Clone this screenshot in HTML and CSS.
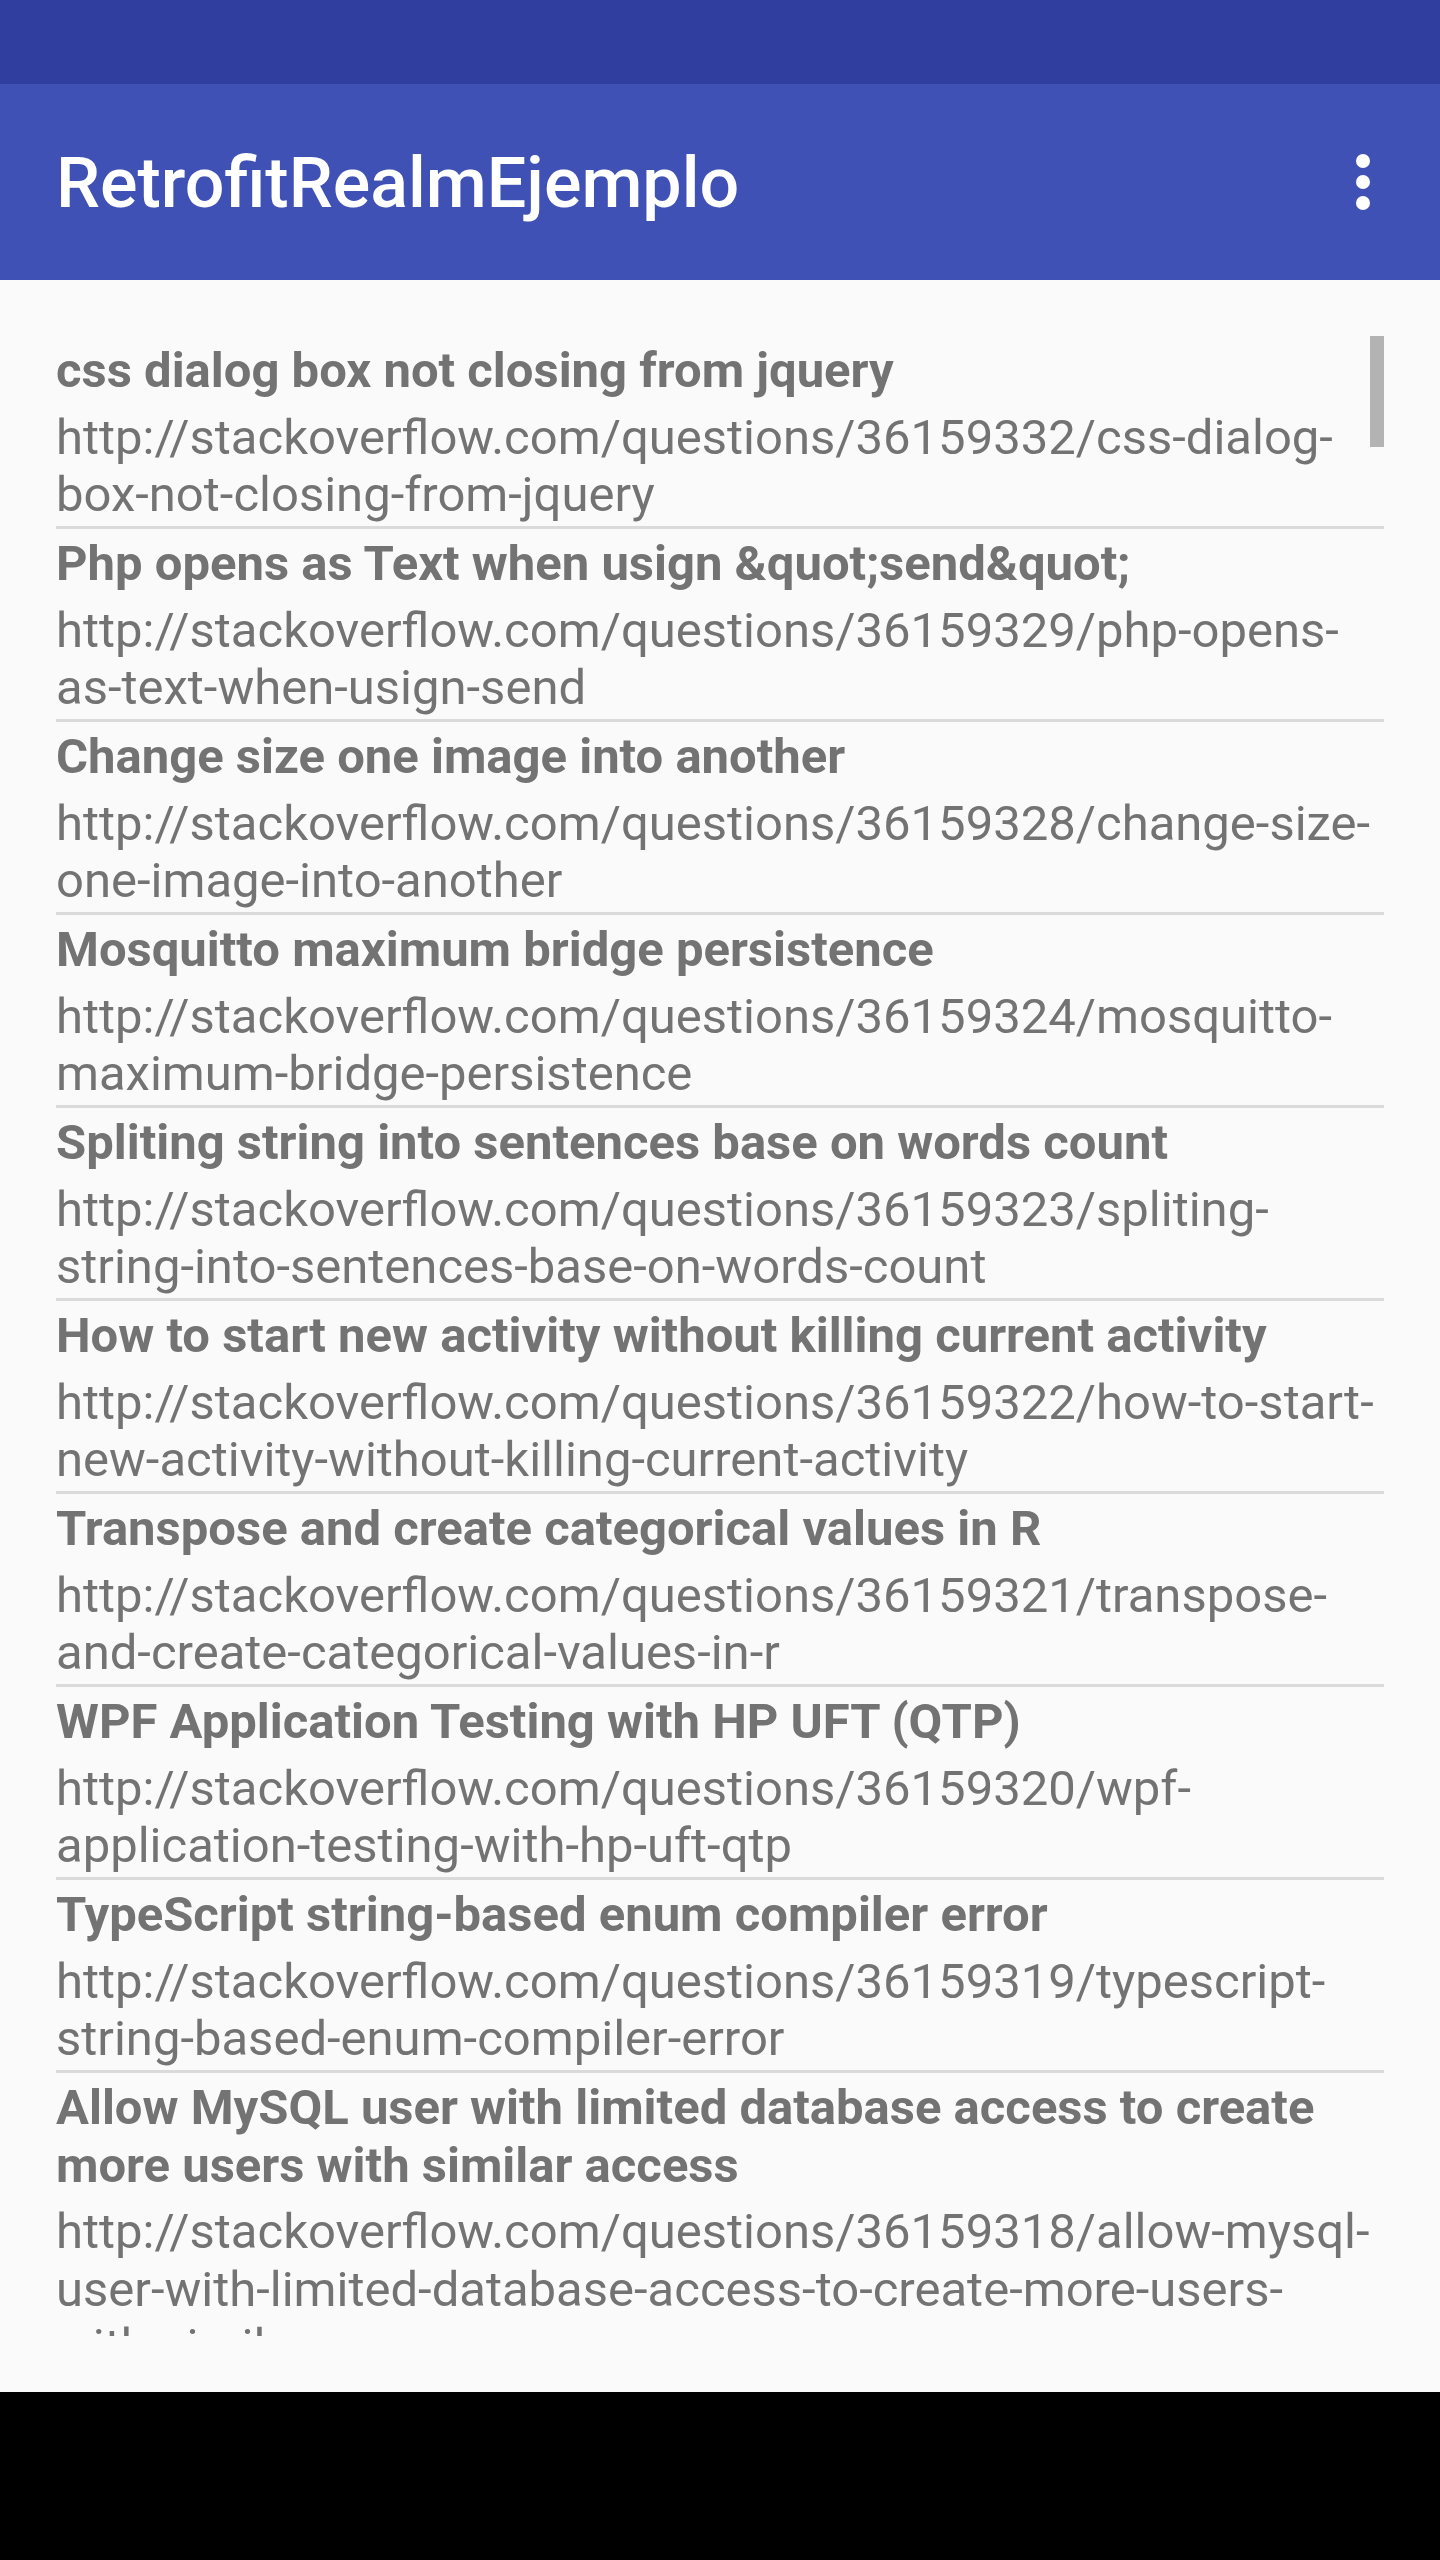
FILE: index.html
```html
<!DOCTYPE html>
<html lang="es">
<head>
<meta charset="utf-8">
<title>RetrofitRealmEjemplo</title>
<link rel="stylesheet" href="styles.css">
</head>
<body>
<div class="statusbar"></div>
<header class="appbar">
  <h1 class="appbar-title">RetrofitRealmEjemplo</h1>
  <button class="overflow" aria-label="Más opciones">
    <svg width="42" height="63" viewBox="0 0 42 63"><circle cx="21" cy="10" r="7" fill="#fff"/><circle cx="21" cy="31" r="7" fill="#fff"/><circle cx="21" cy="52" r="7" fill="#fff"/></svg>
  </button>
</header>
<main class="content">
  <ul class="list">
    <li class="item"><div class="item-title">css dialog box not closing from jquery</div><div class="item-link">http://stackoverflow.com/questions/36159332/css-dialog-box-not-closing-from-jquery</div></li>
    <li class="item"><div class="item-title">Php opens as Text when usign &amp;quot;send&amp;quot;</div><div class="item-link">http://stackoverflow.com/questions/36159329/php-opens-as-text-when-usign-send</div></li>
    <li class="item"><div class="item-title">Change size one image into another</div><div class="item-link">http://stackoverflow.com/questions/36159328/change-size-one-image-into-another</div></li>
    <li class="item"><div class="item-title">Mosquitto maximum bridge persistence</div><div class="item-link">http://stackoverflow.com/questions/36159324/mosquitto-maximum-bridge-persistence</div></li>
    <li class="item"><div class="item-title">Spliting string into sentences base on words count</div><div class="item-link">http://stackoverflow.com/questions/36159323/spliting-string-into-sentences-base-on-words-count</div></li>
    <li class="item"><div class="item-title">How to start new activity without killing current activity</div><div class="item-link">http://stackoverflow.com/questions/36159322/how-to-start-new-activity-without-killing-current-activity</div></li>
    <li class="item"><div class="item-title">Transpose and create categorical values in R</div><div class="item-link">http://stackoverflow.com/questions/36159321/transpose-and-create-categorical-values-in-r</div></li>
    <li class="item"><div class="item-title">WPF Application Testing with HP UFT (QTP)</div><div class="item-link">http://stackoverflow.com/questions/36159320/wpf-application-testing-with-hp-uft-qtp</div></li>
    <li class="item"><div class="item-title">TypeScript string-based enum compiler error</div><div class="item-link">http://stackoverflow.com/questions/36159319/typescript-string-based-enum-compiler-error</div></li>
    <li class="item"><div class="item-title">Allow MySQL user with limited database access to create more users with similar access</div><div class="item-link">http://stackoverflow.com/questions/36159318/allow-mysql-user-with-limited-database-access-to-create-more-users-with-similar-access</div></li>
  </ul>
  <div class="scrollbar"></div>
</main>
<div class="navbar"></div>
</body>
</html>
```
FILE: styles.css
```css
* { box-sizing: border-box; }
html, body { margin: 0; padding: 0; }
body {
  width: 1440px;
  height: 2560px;
  background: #fafafa;
  font-family: Roboto, "Noto Sans", "Liberation Sans", sans-serif;
  overflow: hidden;
  display: flex;
  flex-direction: column;
}
.statusbar {
  height: 84px;
  background: #303f9f;
  flex: none;
}
.appbar {
  height: 196px;
  flex: none;
  background: #3f51b5;
  display: flex;
  align-items: center;
  justify-content: space-between;
  padding: 0 56px;
}
.appbar-title {
  margin: 0;
  color: #fff;
  font-size: 70px;
  font-weight: 500;
  line-height: normal;
  margin-top: 2px;
}
.overflow {
  border: 0;
  background: none;
  padding: 0;
  margin: 0;
  width: 42px;
  height: 63px;
  display: flex;
}
.content {
  position: relative;
  flex: 1;
  padding: 56px 56px;
}
.list {
  list-style: none;
  margin: 0;
  padding: 0;
  height: 2000px;
  overflow: hidden;
}
.item {
  color: #737373;
  font-size: 49px;
  line-height: 57.4px;
  border-bottom: 3.5px solid #dadada;
}
.item-title {
  font-weight: 700;
  padding: 6.3px 0 2.7px;
}
.item-link {
  font-weight: 400;
  padding: 6.3px 0 2.5px;
}
.scrollbar {
  position: absolute;
  top: 56px;
  right: 56px;
  width: 14px;
  height: 111px;
  background: #b3b3b3;
}
.navbar {
  height: 168px;
  flex: none;
  background: #000;
}
```
